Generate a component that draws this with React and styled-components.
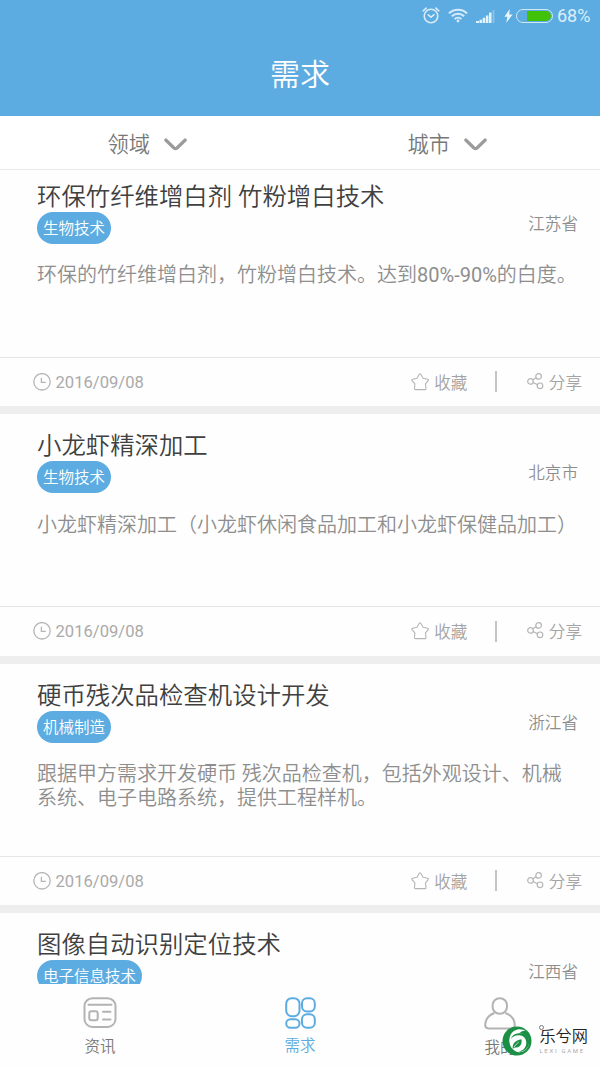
import React from 'react';
import styled, { createGlobalStyle } from 'styled-components';

const demands = [
  {
    id: 1,
    title: '环保竹纤维增白剂 竹粉增白技术',
    tag: '生物技术',
    place: '江苏省',
    desc: <>环保的竹纤维增白剂，竹粉增白技术。达到<b>80%-90%</b>的白度。</>,
    date: '2016/09/08',
  },
  {
    id: 2,
    title: '小龙虾精深加工',
    tag: '生物技术',
    place: '北京市',
    desc: '小龙虾精深加工（小龙虾休闲食品加工和小龙虾保健品加工）',
    date: '2016/09/08',
  },
  {
    id: 3,
    title: '硬币残次品检查机设计开发',
    tag: '机械制造',
    place: '浙江省',
    desc: '跟据甲方需求开发硬币 残次品检查机，包括外观设计、机械系统、电子电路系统，提供工程样机。',
    date: '2016/09/08',
  },
  {
    id: 4,
    title: '图像自动识别定位技术',
    tag: '电子信息技术',
    place: '江西省',
  },
];

const AlarmIcon = () => (
  <svg width="18" height="18" viewBox="0 0 18 18" fill="none" stroke="#d9ecf9" strokeWidth="1.6" strokeLinecap="round">
    <circle cx="9" cy="9" r="6.8" />
    <path d="M6.3 7.8 9 10.3l3-2.6M1.2 3.8l3-2.7M16.8 3.8l-3-2.7" />
  </svg>
);

const WifiIcon = () => (
  <svg width="20" height="15" viewBox="0 0 20 15" fill="none" stroke="#d9ecf9" strokeWidth="2">
    <path d="M.9 5.4a13 13 0 0 1 18.2 0M3.8 8.3a9 9 0 0 1 12.4 0M6.6 11a5 5 0 0 1 6.8 0" />
    <circle cx="10" cy="13" r="1.4" fill="#d9ecf9" stroke="none" />
  </svg>
);

const SignalIcon = () => (
  <svg width="19" height="13" viewBox="0 0 19 13" fill="#e4f2fb">
    <path d="M0 11h3v2H0zM3.5 9.7h2.6V13H3.5zM6.7 7.8h2.6V13H6.7zM9.9 5.4h2.5V13H9.9zM13 2.6h2.5V13H13z" />
    <path d="M16.5 0h2v13h-2z" opacity=".3" />
  </svg>
);

const BoltIcon = () => (
  <svg width="9" height="14" viewBox="0 0 9 14" fill="#e9f5fc">
    <path d="M5.8 0 .4 7.8h3L2.2 14l6.4-8.6H5.2z" />
  </svg>
);

const ChevronIcon = () => (
  <svg width="23" height="13" viewBox="0 0 23 13" fill="none" stroke="#9b9b9b" strokeWidth="3.2" strokeLinecap="round" strokeLinejoin="round">
    <path d="M1.8 2l8.2 8q1.5 1.2 3 0l8.2-8" />
  </svg>
);

const ClockIcon = () => (
  <svg width="18" height="18" viewBox="0 0 18 18" fill="none" stroke="#b5b5b5" strokeWidth="1.3">
    <circle cx="9" cy="8.8" r="8.2" />
    <path d="M8.4 4.8v4.6h4.4" />
  </svg>
);

const StarIcon = () => (
  <svg width="18" height="18" viewBox="0 0 18 18" fill="none" stroke="#b5b5b5" strokeWidth="1.1" strokeLinejoin="round">
    <path d="M8.2 1.3q.8-1 1.6 0l2.3 4 4.5 1q1.2.4.6 1.4l-2.7 3.2.5 4.8q-.1 1.2-1.3.9H4.7q-1.2.1-1.3-.9l.5-4.800L1 7.700q-.6-1 .6-1.400l4.500-1z" />
  </svg>
);

const ShareIcon = () => (
  <svg width="17" height="18" viewBox="0 0 17 18" fill="none" stroke="#b5b5b5" strokeWidth="1.2">
    <circle cx="3.5" cy="8.4" r="2.8" />
    <circle cx="11.6" cy="3.4" r="2.8" />
    <circle cx="13" cy="12.8" r="2.8" />
    <path d="M5.7 6.8l3.6-2M6.1 9.500l4.400 2.200" />
  </svg>
);

const NewsIcon = () => (
  <svg width="34" height="32" viewBox="0 0 34 32" fill="none" stroke="#b3b3b3" strokeWidth="2" strokeLinecap="round">
    <rect x="1.5" y="1.2" width="31" height="28.8" rx="8" />
    <path d="M5.5 7.8h23M20 14.8h7.500M20 22.400h7.500" />
    <rect x="6.3" y="14.200" width="8.400" height="9" rx="2" />
  </svg>
);

const DemandIcon = () => (
  <svg width="31" height="32" viewBox="0 0 31 32" fill="none" stroke="#5dace1" strokeWidth="2">
    <rect x="1.2" y="1.2" width="13.3" height="18" rx="5.5" />
    <rect x="17" y="1.2" width="12.8" height="13.2" rx="5" />
    <rect x="1.2" y="22.3" width="13.3" height="8.4" rx="4.2" />
    <rect x="17" y="17.3" width="12.8" height="13.4" rx="5" />
  </svg>
);

const MineIcon = () => (
  <svg width="32" height="33" viewBox="0 0 32 33" fill="none" stroke="#b3b3b3" strokeWidth="2">
    <rect x="8.6" y="1.2" width="14.4" height="15.6" rx="7" />
    <path d="M10.5 16C5 18 1.5 22.5 1.2 28q0 3.4 3.4 3.4h22.8q3.4 0 3.4-3.4C30.5 22.5 27 18 21.3 16" />
  </svg>
);

const LeafLogo = () => (
  <svg width="30" height="30" viewBox="0 0 30 30">
    <circle cx="15" cy="15" r="14.5" fill="#1a8f45" />
    <path d="M24.5 5.5C19 1.5 11 3 8.3 9.5 5.2 17 9.5 25 16.5 26.3 22.5 27 27.3 22 27 15.5 26.8 10 22 7 17 7.6 21 3.8 23 4.5 24.5 5.5z" fill="#fff" />
    <path d="M17 7.2c6-.6 10.3 3 10.3 8.3 0 6-5 11-11 10.3 5-1 8.2-4.5 8-9.3-.2-4.2-3-7-7.3-7.2-3.5-.2-6 1-8 3.5C10.3 9 13 7.5 17 7.2z" fill="#1a8f45" />
    <path d="M19.5 13.2c.6 5-1 8.3-6.5 8.3l-2.3 1.3C10.3 17.5 13 14.5 19.5 13.2z" fill="#1a8f45" />
    <path d="M11.8 21.3q2.6-3.6 5-5.3" stroke="#fff" strokeWidth=".7" fill="none" />
  </svg>
);

const DemandCard = ({ item }) => (
  <Card>
    <CardBody>
      <Title>{item.title}</Title>
      <Meta>
        <Tag>{item.tag}</Tag>
        <Place>{item.place}</Place>
      </Meta>
      {item.desc && <Desc>{item.desc}</Desc>}
    </CardBody>
    {item.date && (
      <CardFooter>
        <ClockIcon />
        <FooterDate>{item.date}</FooterDate>
        <StarIcon />
        <FooterLabel>收藏</FooterLabel>
        <Divider />
        <ShareIcon />
        <FooterLabel>分享</FooterLabel>
      </CardFooter>
    )}
  </Card>
);

const App = () => (
  <>
    <GlobalStyle />
    <Screen>
      <Header>
        <StatusBar>
          <AlarmIcon />
          <WifiIcon />
          <SignalIcon />
          <BoltIcon />
          <Battery><BatteryLevel /></Battery>
          <Percent>68%</Percent>
        </StatusBar>
        <HeaderTitle>需求</HeaderTitle>
      </Header>
      <Filters>
        <Filter>领域<ChevronIcon /></Filter>
        <Filter>城市<ChevronIcon /></Filter>
      </Filters>
      <List>
        {demands.map(item => (
          <DemandCard key={item.id} item={item} />
        ))}
      </List>
      <TabBar>
        <Tab><NewsIcon />资讯</Tab>
        <Tab $active><DemandIcon />需求</Tab>
        <Tab><MineIcon />我的</Tab>
      </TabBar>
      <Watermark>
        <LeafLogo />
        <Brand>
          <BrandName>乐兮网</BrandName>
          <BrandSub>LEXI GAME</BrandSub>
        </Brand>
      </Watermark>
    </Screen>
  </>
);

export default App;

const GlobalStyle = createGlobalStyle`
  * {
    box-sizing: border-box;
  }

  body {
    margin: 0;
    font-family: Roboto, 'Noto Sans CJK SC', sans-serif;
    font-weight: 350;
    background: #fefefe;
  }

  svg {
    display: block;
    flex-shrink: 0;
  }
`;

const Screen = styled.div`
  position: relative;
  display: flex;
  flex-direction: column;
  width: 600px;
  height: 1067px;
  overflow: hidden;
  background: #fefefe;
`;

const Header = styled.header`
  flex: none;
  height: 116px;
  background: #5dace1;
  color: #fff;
`;

const StatusBar = styled.div`
  display: flex;
  align-items: center;
  height: 31px;
  padding-left: 422px;

  svg:nth-child(2) {
    margin-left: 8px;
  }

  svg:nth-child(3) {
    margin: 1px 0 0 8px;
  }

  svg:nth-child(4) {
    margin-left: 9px;
  }
`;

const Battery = styled.div`
  display: flex;
  justify-content: flex-end;
  width: 37px;
  height: 14px;
  margin-left: 3px;
  padding: 1px;
  border: 1px solid #cfe7f7;
  border-radius: 7px;
`;

const BatteryLevel = styled.div`
  width: 24px;
  border-radius: 0 5px 5px 0;
  background: #42c109;
`;

const Percent = styled.span`
  margin: 1px 0 0 4px;
  font-size: 18px;
  font-weight: 400;
  line-height: 20px;
  color: #dceefa;
`;

const HeaderTitle = styled.h1`
  margin: 0;
  padding-top: 22px;
  font-size: 30px;
  font-weight: inherit;
  line-height: 44px;
  text-align: center;
`;

const Filters = styled.div`
  display: flex;
  flex: none;
  height: 54px;
  border-bottom: 1px solid #e9e9e9;
  background: #fff;
`;

const Filter = styled.div`
  display: flex;
  flex: 1;
  align-items: center;
  padding-left: 107.5px;
  font-size: 21.3px;
  color: #777;

  svg {
    margin: 3px 0 0 14px;
  }
`;

const List = styled.main`
  flex: 1;
  overflow: hidden;
`;

const Card = styled.article`
  height: 249.5px;
  border-bottom: 8px solid #eee;

  &:first-child {
    margin-top: -5.5px;
  }
`;

const CardBody = styled.div`
  height: 192px;
  padding: 15px 22px 0 37px;
`;

const Title = styled.h2`
  margin: 0 0 -2px;
  font-size: 24.4px;
  font-weight: inherit;
  line-height: 34px;
  color: #404040;
`;

const Meta = styled.div`
  display: flex;
  justify-content: space-between;
  height: 32px;
`;

const Tag = styled.span`
  height: 32px;
  padding: 0 6px;
  border-radius: 16px;
  background: #5dace1;
  font-size: 15.5px;
  line-height: 35px;
  color: #fff;
`;

const Place = styled.span`
  font-size: 16.6px;
  line-height: 26px;
  color: #8e8e8e;
`;

const Desc = styled.p`
  width: 541px;
  margin: 20.5px 0 0;
  font-size: 20px;
  line-height: 23.5px;
  color: #8e8e8e;

  b {
    font-weight: 400;
  }
`;

const CardFooter = styled.footer`
  display: flex;
  align-items: center;
  height: 49.5px;
  padding: 0 18px 0 33px;
  border-top: 1px solid #e6e6e6;
  font-size: 16.6px;
  color: #a4a4a4;
`;

const FooterDate = styled.time`
  flex: 1;
  margin: 1px 0 0 4.5px;
  font-weight: 400;
  color: #aaa;
`;

const FooterLabel = styled.span`
  margin-left: 5px;
`;

const Divider = styled.span`
  width: 1.5px;
  height: 21px;
  margin: 0 30px 0 28px;
  background: #c4c4c4;
`;

const TabBar = styled.nav`
  display: flex;
  flex: none;
  height: 83px;
  background: #fefefe;
`;

const Tab = styled.div`
  display: flex;
  flex: 1;
  flex-direction: column;
  align-items: center;
  padding-top: 13px;
  font-size: 15.5px;
  line-height: ${props => (props.$active ? '34px' : '37px')};
  color: ${props => (props.$active ? '#5dace1' : '#777')};
`;

const Watermark = styled.div`
  position: absolute;
  right: 12px;
  bottom: 11px;
  display: flex;
`;

const Brand = styled.div`
  position: relative;
  display: flex;
  flex-direction: column;
  margin-left: 7px;

  &::before {
    content: '';
    position: absolute;
    top: -1px;
    left: 0;
    width: 3px;
    height: 3px;
    border: 1px solid #777;
    border-radius: 50%;
  }
`;

const BrandName = styled.span`
  font-size: 16.2px;
  line-height: 21px;
  color: #222;
`;

const BrandSub = styled.span`
  font-size: 6px;
  font-weight: 400;
  line-height: 8px;
  letter-spacing: 1.7px;
  color: #aaa;
`;
